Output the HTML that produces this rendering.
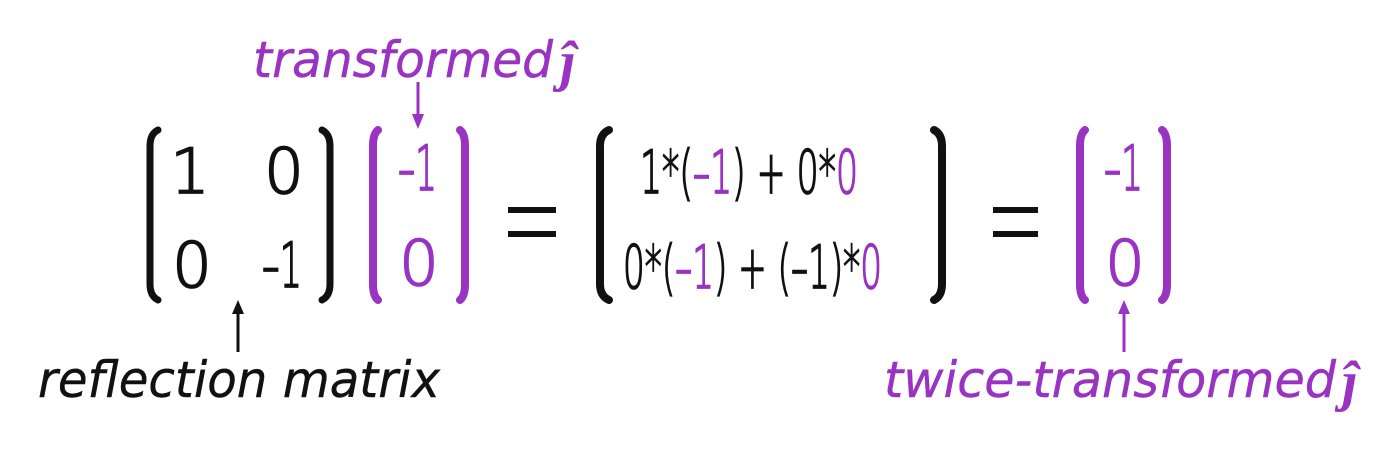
<!DOCTYPE html>
<html><head><style>
html,body{margin:0;padding:0;background:#fff;width:1400px;height:452px;overflow:hidden}
svg{display:block}
text{font-family:"DejaVu Sans ExtraLight","DejaVu Sans",sans-serif;font-weight:200;stroke-width:1.8}
.k{fill:#111;stroke:#111}
.p{fill:#9933c2;stroke:#9933c2}
tspan.p{fill:#9933c2;stroke:#9933c2}
.n{font-size:62px}
.s{font-size:60px}
.l{font-size:50px;font-style:italic;stroke-width:0.4}
.j{font-family:"Liberation Serif",serif;font-weight:bold;font-style:italic;font-size:56px;stroke-width:0}
</style></head><body>
<svg width="1400" height="452" viewBox="0 0 1400 452" xmlns="http://www.w3.org/2000/svg">
<g fill="none" stroke-width="7" stroke-linecap="round">
 <path d="M158 130 Q150 134 150 146 L150 284 Q150 296 158 300" stroke="#111"/>
 <path d="M322 130 Q330 134 330 146 L330 284 Q330 296 322 300" stroke="#111"/>
 <path d="M378 130 Q373 134 373 146 L373 284 Q373 296 378 300" stroke="#9933c2" stroke-width="8"/>
 <path d="M460 130 Q465 134 465 146 L465 284 Q465 296 460 300" stroke="#9933c2" stroke-width="8"/>
 <path d="M609 130 Q600 134 600 146 L600 284 Q600 296 609 300" stroke="#111" stroke-width="8"/>
 <path d="M934 130 Q942 134 942 146 L942 284 Q942 296 934 300" stroke="#111" stroke-width="8"/>
 <path d="M1085 130 Q1080 134 1080 146 L1080 284 Q1080 296 1085 300" stroke="#9933c2" stroke-width="8"/>
 <path d="M1162 130 Q1167 134 1167 146 L1167 284 Q1167 296 1162 300" stroke="#9933c2" stroke-width="8"/>
</g>
<g stroke-width="6">
 <line x1="508" y1="210" x2="556" y2="210" stroke="#111"/>
 <line x1="508" y1="234" x2="556" y2="234" stroke="#111"/>
 <line x1="993" y1="210" x2="1038" y2="210" stroke="#111"/>
 <line x1="993" y1="234" x2="1038" y2="234" stroke="#111"/>
</g>
<line x1="418" y1="82" x2="418" y2="116" stroke="#9933c2" stroke-width="3"/>
<path d="M412 114 L424 114 L418 129 Z" fill="#9933c2"/>
<line x1="238" y1="312" x2="238" y2="352" stroke="#111" stroke-width="3"/>
<path d="M232 314 L244 314 L238 300 Z" fill="#111"/>
<line x1="1124" y1="312" x2="1124" y2="352" stroke="#9933c2" stroke-width="3"/>
<path d="M1118 314 L1130 314 L1124 300 Z" fill="#9933c2"/>
<text class="n k" x="190" y="193" text-anchor="middle">1</text>
<text class="n k" x="284" y="193" text-anchor="middle">0</text>
<text class="n k" x="192" y="287" text-anchor="middle">0</text>
<text class="n k" x="262" y="287" textLength="40" lengthAdjust="spacingAndGlyphs">–1</text>
<text class="n p" x="398" y="190" textLength="39" lengthAdjust="spacingAndGlyphs">–1</text>
<text class="n p" x="419" y="285" text-anchor="middle">0</text>
<text class="n p" x="1104" y="190" textLength="39" lengthAdjust="spacingAndGlyphs">–1</text>
<text class="n p" x="1125" y="285" text-anchor="middle">0</text>
<text class="s k" x="640" y="193" textLength="218" lengthAdjust="spacingAndGlyphs">1*(<tspan class="p">–1</tspan>) + 0*<tspan class="p">0</tspan></text>
<text class="s k" x="623" y="288" textLength="259" lengthAdjust="spacingAndGlyphs">0*(<tspan class="p">–1</tspan>) + (–1)*<tspan class="p">0</tspan></text>
<text class="l p" x="253" y="77" textLength="300" lengthAdjust="spacingAndGlyphs">transformed</text>
<text class="j p" x="560" y="80">ĵ</text>
<text class="l k" x="38" y="397" textLength="402" lengthAdjust="spacingAndGlyphs">reflection matrix</text>
<text class="l p" x="884" y="397" textLength="452" lengthAdjust="spacingAndGlyphs">twice-transformed</text>
<text class="j p" x="1342" y="400">ĵ</text>
</svg>
</body></html>
